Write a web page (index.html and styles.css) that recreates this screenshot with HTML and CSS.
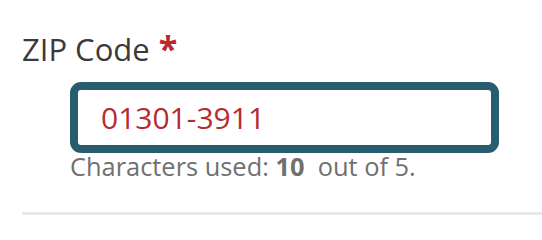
FILE: index.html
```html
<!DOCTYPE html>
<html lang="en">
<head>
<meta charset="utf-8">
<title>ZIP Code</title>
<link rel="stylesheet" href="styles.css">
</head>
<body>
<div class="field">
  <label class="field-label" for="zip">ZIP Code <span class="req">*</span></label>
  <div class="field-body">
    <input class="field-input" id="zip" type="text" value="01301-3911">
    <div class="field-help">Characters used: <strong>10</strong>&nbsp; out of 5.</div>
  </div>
</div>
<div class="divider"></div>
</body>
</html>
```

FILE: styles.css
```css
html, body {
  margin: 0;
  padding: 0;
  background: #ffffff;
  font-family: "Open Sans", "Noto Sans", sans-serif;
  overflow: hidden;
}

.field {
  padding: 28px 0 0 22px;
}

.field-label {
  display: block;
  font-size: 31px;
  line-height: 42px;
  color: #3a3a3a;
}

.req {
  color: #b72a33;
  font-weight: 700;
  font-size: 34px;
  line-height: 0;
  margin-left: 1px;
}

.field-body {
  margin: 12px 0 0 48px;
}

.field-input {
  display: block;
  box-sizing: border-box;
  width: 429px;
  height: 71px;
  margin: 0;
  padding: 0 0 0 23px;
  border: 8px solid #275d6e;
  border-radius: 11px;
  background: #ffffff;
  font-family: "Open Sans", "Noto Sans", sans-serif;
  font-size: 30px;
  color: #b62a33;
  outline: none;
}

.field-help {
  font-size: 25.4px;
  line-height: 26px;
  color: #707070;
}

.field-help strong {
  font-weight: 700;
}

.divider {
  margin: 33px 0 0 22px;
  height: 3px;
  background: #e8e8e8;
}
```
